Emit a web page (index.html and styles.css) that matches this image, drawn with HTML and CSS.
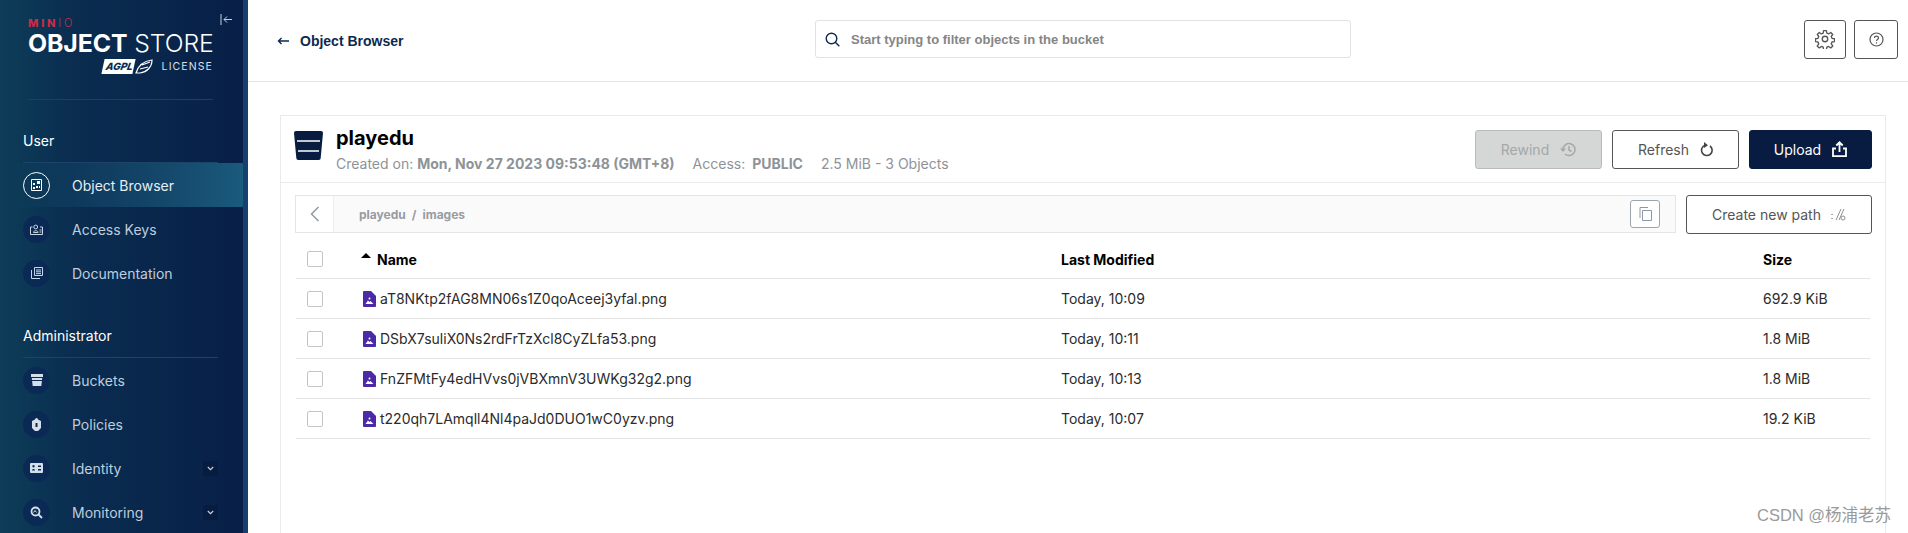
FILE: index.html
```html
<!DOCTYPE html>
<html lang="en">
<head>
    <meta charset="UTF-8">
    <title>Object Browser</title>
    <link rel="stylesheet" href="styles.css">
</head>
<body>
<div class="app">
    <aside class="sidebar">
        <button class="collapse" aria-label="Collapse">
            <svg width="13" height="13" viewBox="0 0 13 13" fill="none" stroke="#c5d0dc" stroke-width="1"><path d="M1 1v11M12 6.5H4M7 3.5l-3 3 3 3"/></svg>
        </button>
        <div class="brand">
            <div class="minio"><b>MIN</b><i>I</i><span>O</span></div>
            <div class="product"><b>OBJECT</b> STORE</div>
            <div class="license">
                <span class="agpl">AGPL</span>
                <svg class="wing" width="18" height="15" viewBox="0 0 18 15" fill="none" stroke="#fff" stroke-width="1.200"><path d="M1 14C3 7 9 2 17 1c0 7-5 12-12 13zM5 10l8-2M7 6l8-3"/></svg>
                <span class="license-word">LICENSE</span>
            </div>
        </div>

        <div class="section-title">User</div>
        <a class="nav-item active">
            <span class="nav-icon"><svg width="11" height="12" viewBox="0 0 11 12"><path fill="none" stroke="#fff" d="M.5.5h10v11H.5z"/><path fill="#fff" d="M6 2h3v3H6zM2 4h2v2H2zM5 7h2v2H5zM2 8h2v2H2zM8 7h1v2H8z"/></svg></span>
            <span>Object Browser</span>
        </a>
        <a class="nav-item">
            <span class="nav-icon"><svg width="13" height="11" viewBox="0 0 13 11" fill="none" stroke="#c9d6e4"><path d="M2.500 3H.5v7.500h12V3H10"/><path d="M3.500 8.500C3.500 6 8 6 8 8.500z"/><circle cx="5.700" cy="3" r="1.900"/><path d="M9.500 6h2M9.500 8h2"/></svg></span>
            <span>Access Keys</span>
        </a>
        <a class="nav-item">
            <span class="nav-icon"><svg width="12" height="12" viewBox="0 0 12 12" fill="none" stroke="#c9d6e4"><path d="M3.500.5h8v8h-8zM.5 3v8.500H9M5 3h5M5 4.800h5M5 6.600h5"/></svg></span>
            <span>Documentation</span>
        </a>

        <div class="section-title admin">Administrator</div>
        <a class="nav-item">
            <span class="nav-icon"><svg width="12" height="12" viewBox="0 0 12 12" fill="#d5dfe9"><path d="M0 0h12v3H0zM.8 4h10.400l-.2 2H1zM1.100 7h9.800l-.6 5H1.700z"/></svg></span>
            <span>Buckets</span>
        </a>
        <a class="nav-item">
            <span class="nav-icon"><svg width="9" height="13" viewBox="0 0 9 13"><path fill="#d5dfe9" fill-rule="evenodd" d="M4.500 0a1.500 1.500 0 0 1 1.500 1.500L9 3v7l-3 3H3l-3-3V3l3-1.500A1.500 1.500 0 0 1 4.500 0zM3.500 5v4h2V5z"/></svg></span>
            <span>Policies</span>
        </a>
        <a class="nav-item">
            <span class="nav-icon"><svg width="13" height="10" viewBox="0 0 13 10"><path fill="#d5dfe9" fill-rule="evenodd" d="M1 0h11a1 1 0 0 1 1 1v8a1 1 0 0 1-1 1H1a1 1 0 0 1-1-1V1a1 1 0 0 1 1-1zM8 2.500V4h3V2.500zM8 6v1.500h3V6zM3.500 2a1.200 1.200 0 1 0 .01 0zM2 7.500h3C5 5.500 2 5.500 2 7.500z"/></svg></span>
            <span>Identity</span>
            <span class="chevron"><svg width="7" height="5" viewBox="0 0 7 5" fill="none" stroke="#c9d6e4" stroke-width="1.100"><path d="M.8 1l2.700 2.700L6.200 1"/></svg></span>
        </a>
        <a class="nav-item">
            <span class="nav-icon"><svg width="13" height="13" viewBox="0 0 13 13" fill="none" stroke="#d5dfe9" stroke-width="1.800"><circle cx="5.500" cy="5.500" r="4"/><path d="M8.500 8.500l3.500 3.500"/><path d="M3.500 6.500l1.500-2 1.500 2" stroke-width="1"/></svg></span>
            <span>Monitoring</span>
            <span class="chevron"><svg width="7" height="5" viewBox="0 0 7 5" fill="none" stroke="#c9d6e4" stroke-width="1.100"><path d="M.8 1l2.700 2.700L6.200 1"/></svg></span>
        </a>
    </aside>

    <main class="main">
        <header class="topbar">
            <a class="back">
                <svg width="12" height="8" viewBox="0 0 12 8" fill="none" stroke="#0b2a50" stroke-width="1.400"><path d="M12 4H1.500M4.500 1l-3 3 3 3"/></svg>
                <span>Object Browser</span>
            </a>
            <div class="search">
                <svg width="15" height="15" viewBox="0 0 15 15" fill="none" stroke="#0b2a50" stroke-width="1.400"><circle cx="6.500" cy="6.500" r="5.300"/><path d="M10.300 10.300l4 4"/></svg>
                <span>Start typing to filter objects in the bucket</span>
            </div>
            <div class="top-actions">
                <button class="icon-btn settings" aria-label="Settings">
                    <svg width="20" height="20" viewBox="0 0 24 24" fill="none" stroke="#555" stroke-width="1.600" stroke-linejoin="round"><circle cx="12" cy="12" r="3.300"/><path d="M10.300 2h3.400l.5 3 2.200.9 2.500-1.800 2.400 2.400-1.800 2.500.9 2.200 3 .5v3.400l-3 .5-.9 2.200 1.800 2.500-2.400 2.400-2.500-1.800-2.200.9-.5 3h-3.400l-.5-3-2.200-.9-2.500 1.800-2.400-2.400 1.800-2.500-.9-2.200-3-.5v-3.400l3-.5.9-2.200-1.800-2.500 2.400-2.400 2.500 1.800 2.200-.9z"/></svg>
                </button>
                <button class="icon-btn help" aria-label="Help">
                    <svg width="15" height="15" viewBox="0 0 15 15" fill="none" stroke="#555" stroke-width="1.200"><circle cx="7.500" cy="7.500" r="6.500"/><path d="M5.500 6c0-2.600 4-2.600 4 0 0 1.500-2 1.500-2 3M7.500 10.300v1.200"/></svg>
                </button>
            </div>
        </header>

        <div class="content">
            <section class="bucket-card">
                <svg class="bucket-icon" width="29" height="29" viewBox="0 0 29 29"><path fill="#081c42" d="M0 2a2 2 0 0 1 2-2h25a2 2 0 0 1 2 2l-2.300 25a2 2 0 0 1-2 2H4.300a2 2 0 0 1-2-2z"/><path fill="none" stroke="#fff" stroke-width="1.500" d="M3 10h23M4 20h21"/></svg>
                <div class="bucket-info">
                    <h1>playedu</h1>
                    <p>
                        <span class="meta">Created on: <b>Mon, Nov 27 2023 09:53:48 (GMT+8)</b></span>
                        <span class="meta">Access: <b class="access">PUBLIC</b></span>
                        <span class="meta">2.5 MiB - 3 Objects</span>
                    </p>
                </div>
                <div class="bucket-actions">
                    <button class="btn disabled">Rewind
                        <svg width="16" height="15" viewBox="0 0 16 15" fill="none" stroke="#a3a8a8" stroke-width="1.500"><path d="M3 7.500a6 6 0 1 1 2 4.500M9 4v4l2.500 1.500"/><path fill="#a3a8a8" stroke="none" d="M0 6.500h6L3 10z"/></svg>
                    </button>
                    <button class="btn">Refresh
                        <svg width="13" height="15" viewBox="0 0 13 15" fill="none" stroke="#444" stroke-width="1.600"><path d="M5 3.300a5.300 5.300 0 1 0 5 .7"/><path fill="#444" stroke="none" d="M4 0l4 3.300-4 2.700z"/></svg>
                    </button>
                    <button class="btn primary">Upload
                        <svg width="15" height="16" viewBox="0 0 15 16" fill="none" stroke="#fff" stroke-width="1.800"><path d="M7.500 11V2M4.300 4.500L7.500 1.300l3.200 3.200M4 7.500H1v7.600h13V7.500h-3"/></svg>
                    </button>
                </div>
            </section>

            <section class="browser-card">
                <div class="path-row">
                    <div class="crumbs">
                        <span class="crumb-back"><svg width="10" height="16" viewBox="0 0 10 16" fill="none" stroke="#8f99a5" stroke-width="1.500"><path d="M8.500 1L1.500 8l7 7"/></svg></span>
                        <span class="crumb-path">playedu<span class="sep">/</span>images</span>
                        <span class="copy-btn"><svg width="13" height="14" viewBox="0 0 13 14" fill="none" stroke="#8b97a5"><path d="M3.500 3.500h9v10h-9z"/><path d="M1 11V.5h8"/></svg></span>
                    </div>
                    <button class="btn new-path">Create new path
                        <svg width="15" height="13" viewBox="0 0 15 13" fill="none" stroke="#8a8f95"><path d="M5 12L10 1M8 12L13 1"/><circle cx="12" cy="10" r="2"/><path d="M1 6v1M1 10v1" stroke-width="1.500"/></svg>
                    </button>
                </div>

                <div class="table">
                    <div class="row head">
                        <span class="check"></span>
                        <span class="name-head"><i class="sort-caret"></i>Name</span>
                        <span>Last Modified</span>
                        <span>Size</span>
                    </div>
                    <div class="row">
                        <span class="check"></span>
                        <span class="file"><svg class="file-icon" viewBox="0 0 13 16"><use href="#file"/></svg>aT8NKtp2fAG8MN06s1Z0qoAceej3yfal.png</span>
                        <span>Today, 10:09</span>
                        <span>692.9 KiB</span>
                    </div>
                    <div class="row">
                        <span class="check"></span>
                        <span class="file"><svg class="file-icon" viewBox="0 0 13 16"><use href="#file"/></svg>DSbX7suliX0Ns2rdFrTzXcl8CyZLfa53.png</span>
                        <span>Today, 10:11</span>
                        <span>1.8 MiB</span>
                    </div>
                    <div class="row">
                        <span class="check"></span>
                        <span class="file"><svg class="file-icon" viewBox="0 0 13 16"><use href="#file"/></svg>FnZFMtFy4edHVvs0jVBXmnV3UWKg32g2.png</span>
                        <span>Today, 10:13</span>
                        <span>1.8 MiB</span>
                    </div>
                    <div class="row">
                        <span class="check"></span>
                        <span class="file"><svg class="file-icon" viewBox="0 0 13 16"><use href="#file"/></svg>t220qh7LAmqll4Nl4paJd0DUO1wC0yzv.png</span>
                        <span>Today, 10:07</span>
                        <span>19.2 KiB</span>
                    </div>
                </div>
            </section>
        </div>
    </main>
</div>
<div class="watermark">CSDN @杨浦老苏</div>

<svg width="0" height="0" class="defs">
    <symbol id="file" viewBox="0 0 13 16">
        <path fill="#4b2aa8" d="M0 1a1 1 0 0 1 1-1h7l5 5v10a1 1 0 0 1-1 1H1a1 1 0 0 1-1-1z"/>
        <path fill="#fff" d="M2.500 13l2.500-3.500 1.500 1.500 1-1 3 3z"/>
        <circle fill="#fff" cx="6.500" cy="7.500" r="1"/>
    </symbol>
</svg>
</body>
</html>
```

FILE: styles.css
```css
*{margin:0;padding:0;box-sizing:border-box;}
html,body{height:533px;overflow:hidden;}
body{font-family:"Inter","Liberation Sans",sans-serif;color:#000;background:#fff;}
button{font-family:inherit;cursor:pointer;background:none;}
.defs{position:absolute;}

.app{display:flex;height:533px;overflow:hidden;}

/* sidebar */
.sidebar{
    position:relative;
    width:248px;
    height:533px;
    flex:none;
    overflow:hidden;
    border-right:5px solid #16406f;
    background:linear-gradient(90deg,#0d3d58 0%,#0a2d50 30%,#081f47 100%);
    color:#fff;
}
.collapse{position:absolute;left:220px;top:13px;border:0;line-height:0;}
.brand{height:100px;margin:0 30px 0 28px;padding-top:18px;border-bottom:1px solid #1b3f66;}
.minio{height:10px;font-size:11px;line-height:10px;letter-spacing:2.800px;color:#c72c48;white-space:nowrap;}
.minio b{font-weight:800;}
.minio i{font-style:normal;font-weight:300;}
.minio span{font-weight:300;letter-spacing:0;}
.product{margin-top:2px;font-size:24.800px;line-height:26px;font-weight:300;white-space:nowrap;letter-spacing:-.1px;}
.product b{font-weight:700;}
.license{display:flex;align-items:center;justify-content:flex-end;height:20px;margin-top:0;}
.agpl{
    display:block;
    background:#fff;
    color:#0a2a50;
    font-size:10px;
    font-weight:800;
    font-style:italic;
    line-height:15px;
    padding:0 1px 0 3px;
    transform:skewX(-12deg);
}
.wing{margin-left:1px;margin-right:9px;}
.license-word{font-size:10.500px;letter-spacing:1.100px;color:#d8e0e8;}

.section-title{
    height:32px;
    margin:31px 25px 0 23px;
    border-bottom:1px solid #1b4468;
    font-size:14px;
    line-height:20px;
}

.nav-item{display:flex;align-items:center;height:44px;padding:0 25px 0 23px;font-size:14px;color:#bfcddc;}
.nav-item.active{color:#e6edf3;background:linear-gradient(90deg,rgba(26,90,124,0) 5%,#1a5a7c 100%);}
.nav-icon{
    display:flex;
    align-items:center;
    justify-content:center;
    width:27px;
    height:27px;
    margin-right:22px;
    border-radius:50%;
    background:#0a2a55;
}
.active .nav-icon{border:1px solid #fff;background:transparent;}
.chevron{display:flex;align-items:center;justify-content:center;width:15px;height:15px;margin-left:auto;border-radius:2px;background:#081c40;}

/* top bar */
.main{flex:1;min-width:0;height:533px;overflow:hidden;}
.topbar{display:flex;align-items:center;height:82px;padding:0 10px 3px 29px;border-bottom:1px solid #e5e5e5;}
.back{display:flex;align-items:center;gap:11px;width:538px;margin-top:4px;font-family:"Liberation Sans",sans-serif;font-weight:bold;font-size:14px;color:#0b2a50;}
.search{
    display:flex;
    align-items:center;
    gap:11px;
    width:536px;
    height:38px;
    padding-left:9px;
    border:1px solid #e2e2e2;
    border-radius:3px;
    font-family:"Liberation Sans",sans-serif;
    font-size:13px;
    font-weight:bold;
    color:#858585;
}
.top-actions{display:flex;gap:8px;margin-left:auto;}
.icon-btn{display:flex;align-items:center;justify-content:center;height:39px;border:1px solid #555;border-radius:3px;}
.settings{width:42px;}
.help{width:44px;}

/* cards */
.content{padding:33px 22px 0 32px;}
.bucket-card{display:flex;align-items:center;height:68px;padding:0 13px;border:1px solid #eaeaea;}
.bucket-icon{flex:none;margin:-7px 13px 0 0;}
.bucket-info h1{font-size:20px;line-height:24px;font-weight:700;}
.bucket-info p{display:flex;gap:18px;margin-top:5px;font-size:14px;line-height:18px;color:#8e9397;}
.bucket-info b{font-weight:700;color:#8e9397;}
.access{margin-left:3px;}
.bucket-actions{display:flex;gap:10px;margin-left:auto;}

.btn{
    display:flex;
    align-items:center;
    justify-content:center;
    gap:11px;
    width:127px;
    height:39px;
    border:1px solid #555;
    border-radius:3px;
    font-size:14px;
    color:#555;
    background:#fff;
}
.btn.disabled{background:#d5d7d7;border-color:#bbb;color:#a3a8a8;}
.btn.primary{width:123px;background:#081c42;border-color:#081c42;color:#fff;}

.browser-card{height:350px;padding:12px 13px 0 14px;border:1px solid #eaeaea;border-width:0 1px 0 1px;}
.path-row{display:flex;gap:10px;}
.crumbs{display:flex;align-items:center;flex:1;height:38px;border:1px solid #e5e5e5;background:#fbfafa;font-size:12px;font-weight:700;color:#969ca3;}
.crumb-back{display:flex;align-items:center;justify-content:center;width:38px;height:100%;border-right:1px solid #eee;background:#fff;}
.crumb-path{padding-left:25px;white-space:pre;}
.sep{margin:0 6px;}
.copy-btn{display:flex;align-items:center;justify-content:center;width:30px;height:28px;margin-left:auto;margin-right:15px;border:1px solid #9ba5b0;border-radius:3px;background:#fff;}
.new-path{width:186px;gap:10px;}

.table{margin:6px 2px 0 1px;}
.row{
    display:grid;
    grid-template-columns:67px 698px 702px 1fr;
    align-items:center;
    height:40px;
    border-bottom:1px solid #e3e3e3;
    font-size:14px;
    color:#2b2b2b;
}
.row.head{height:39px;font-weight:700;color:#000;}
.check{display:block;width:16px;height:16px;margin-left:11px;border:1px solid #c4c4c4;border-radius:2px;background:#fff;}
.name-head{display:flex;align-items:center;}
.sort-caret{
    width:0;
    height:0;
    margin:-7px 6px 0 -2px;
    border-left:5px solid transparent;
    border-right:5px solid transparent;
    border-bottom:5px solid #000;
}
.file{display:flex;align-items:center;gap:4px;}
.file-icon{width:13px;height:16px;}

.watermark{
    position:absolute;
    left:1757px;
    top:505px;
    font-family:"Liberation Sans","Noto Sans CJK SC",sans-serif;
    font-size:16.500px;
    line-height:20px;
    color:#9a9a9a;
    white-space:nowrap;
}
```
